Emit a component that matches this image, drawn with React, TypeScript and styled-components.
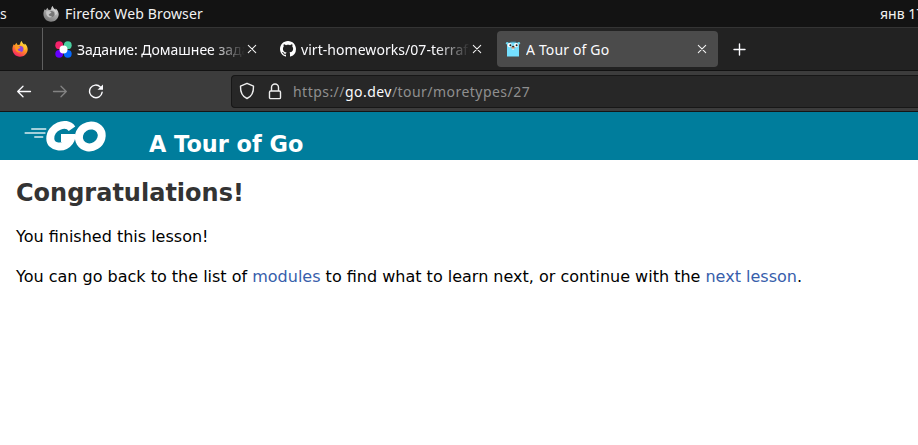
import React from 'react';
import styled, { createGlobalStyle } from 'styled-components';

const GlobalStyle = createGlobalStyle`
  * { box-sizing: border-box; }
  html, body { margin: 0; background: #fff; overflow: hidden; }
`;

const Screen = styled.div`
  width: 918px;
  height: 445px;
  overflow: hidden;
  background: #fff;
  font-family: 'DejaVu Sans', sans-serif;
`;

const UiText = styled.span<{ $spacing?: number; $size?: number }>`
  font-family: 'Noto Sans', sans-serif;
  font-size: ${(p) => p.$size ?? 14}px;
  letter-spacing: ${(p) => p.$spacing ?? 0}px;
  line-height: 20px;
  white-space: pre;
`;

const SystemBar = styled.header`
  display: flex;
  align-items: center;
  height: 27px;
  background: #131313;
  color: #f2f2f2;
`;
const Activities = styled.div`
  width: 43px;
  display: flex;
`;
const AppMenu = styled.div`
  display: flex;
  align-items: center;
  gap: 6px;
  flex: 1;
`;
const Clock = styled.div`
  width: 38px;
  overflow: hidden;
  display: flex;
`;

const TabStrip = styled.nav`
  display: flex;
  align-items: center;
  height: 44px;
  border-top: 1px solid #343434;
  border-bottom: 1px solid #121212;
  background: #222;
  color: #fbfbfe;
`;
const PinnedTab = styled.div`
  width: 43px;
  height: 100%;
  padding-left: 12px;
  display: flex;
  align-items: center;
  border-right: 1px solid #606060;
`;
const Tab = styled.div<{ $active?: boolean; $width: number; $before: number }>`
  display: flex;
  align-items: center;
  width: ${(p) => p.$width}px;
  height: 36px;
  margin-left: ${(p) => p.$before}px;
  padding: 0 11px 0 8px;
  border-radius: 4px;
  background: ${(p) => (p.$active ? '#4b4b4b' : 'transparent')};
`;
const TabLabel = styled.div<{ $fade?: boolean }>`
  flex: 1;
  min-width: 0;
  margin: 0 2px 0 5px;
  padding-top: 1px;
  overflow: hidden;
  display: flex;
  mask-image: ${(p) => (p.$fade ? 'linear-gradient(to right, #000 calc(100% - 34px), transparent)' : 'none')};
`;
const NewTab = styled.div`
  display: flex;
  margin-left: 14px;
`;

const Toolbar = styled.div`
  display: flex;
  align-items: center;
  height: 41px;
  border-bottom: 1px solid #151515;
  background: #3c3c3c;
`;
const NavButtons = styled.div`
  width: 231px;
  padding-left: 16px;
  display: flex;
  gap: 20px;
`;
const AddressBar = styled.div`
  flex: 1;
  height: 33px;
  display: flex;
  align-items: center;
  padding-left: 7px;
  border: 1px solid #171717;
  border-right: 0;
  border-radius: 4px 0 0 4px;
  background: #272727;
  color: #8f8f8f;
`;
const Shield = styled.div`
  display: flex;
  margin-right: 13px;
`;
const Lock = styled.div`
  display: flex;
  margin-right: 11px;
`;
const Url = styled.div`
  display: flex;
  padding-top: 2px;
`;
const Host = styled.span`
  color: #fbfbfe;
`;

const SiteHeader = styled.header`
  display: flex;
  align-items: flex-start;
  height: 48px;
  padding-left: 24px;
  background: #007d9c;
  color: #fff;
`;
const LogoBox = styled.div`
  width: 125px;
  padding-top: 8px;
`;
const SiteTitle = styled.div`
  padding-top: 19px;
  font-size: 22.4px;
  font-weight: 700;
  line-height: 26px;
`;

const Lesson = styled.main`
  padding: 19px 16px;
  color: #000;
  font-size: 16px;
  line-height: 20px;
`;
const Heading = styled.h2`
  margin: 0;
  color: #333;
  font-size: 24px;
  line-height: 28px;
`;
const Paragraph = styled.p`
  margin: 20px 0 0;
  white-space: nowrap;
`;
const Link = styled.a`
  color: #375eab;
  text-decoration: none;
`;

function FirefoxIcon({ mono, size = 16 }: { mono?: boolean; size?: number }) {
  const id = mono ? 'mono' : 'color';
  return (
    <svg width={size} height={size} viewBox="0 0 16 16">
      <defs>
        <linearGradient id={id} x1=".8" y1="0" x2=".25" y2="1">
          <stop offset="0" stopColor={mono ? '#ddd' : '#fff44f'} />
          <stop offset=".45" stopColor={mono ? '#aaa' : '#ff9a20'} />
          <stop offset="1" stopColor={mono ? '#777' : '#f5156c'} />
        </linearGradient>
      </defs>
      <path fill={`url(#${id})`} d="M1.8 3.3 2.8 4.3C3.3 3.1 4 2.3 4.6 1.8L5 3.4 7 4 8.1 3.2C8.1 1.8 8.9.7 9.8 0 10.1 2.1 11.3 2.6 12.4 3.8L12.7 2.6C14.7 4 15.8 6.4 15.7 8.8 15.3 13 12 15.8 8 15.8 3.7 15.8.4 12.5.4 8.1.4 6.2 1 4.6 1.8 3.3Z" />
      <circle cx="8.3" cy="8" r="3.1" fill={mono ? '#777' : '#8a45dc'} />
      <path fill={mono ? '#c5c5c5' : '#ff9821'} d="M3.2 5.2 6.2 5 8.5 6.2 7.2 7.5 5.7 8.3C5.9 10 7.5 10.6 9.2 10 7.5 13 3.2 10.7 3.2 7Z" />
      <path fill={mono ? '#d4d4d4' : '#ffc730'} d="M9 3.8C12.2 4.5 12.9 7 12 9.4L14 7.7C13.8 5.4 12 3.3 9.8 2.2Z" />
    </svg>
  );
}

function PetalsIcon() {
  return (
    <svg width="17" height="17" viewBox="0 0 17 17">
      <circle cx="4.2" cy="4.2" r="3.9" fill="#f5236b" />
      <circle cx="12.8" cy="4.2" r="3.9" fill="#4bd0a0" />
      <circle cx="4.2" cy="12.8" r="3.9" fill="#6500ff" />
      <circle cx="12.8" cy="12.8" r="3.9" fill="#0669ff" />
      <circle cx="8.5" cy="8.5" r="4" fill="#fff" />
    </svg>
  );
}

function GithubIcon() {
  return (
    <svg width="16" height="16" viewBox="0 0 16 16" fill="#fff">
      <path d="M8 0C3.58 0 0 3.58 0 8c0 3.54 2.29 6.53 5.47 7.59.4.07.55-.17.55-.38 0-.19-.01-.82-.01-1.49-2.01.37-2.53-.49-2.69-.94-.09-.23-.48-.94-.82-1.13-.28-.15-.68-.52-.01-.53.63-.01 1.08.58 1.23.82.72 1.21 1.87.87 2.33.66.07-.52.28-.87.51-1.07-1.78-.2-3.64-.89-3.64-3.95 0-.87.31-1.59.82-2.15-.08-.2-.36-1.02.08-2.12 0 0 .67-.21 2.2.82.64-.18 1.32-.27 2-.27s1.36.09 2 .27c1.53-1.04 2.2-.82 2.2-.82.44 1.1.16 1.92.08 2.12.51.56.82 1.27.82 2.15 0 3.07-1.87 3.75-3.65 3.95.29.25.54.73.54 1.48 0 1.07-.01 1.93-.01 2.2 0 .21.15.46.55.38A8.01 8.01 0 0 0 16 8c0-4.42-3.58-8-8-8Z" />
    </svg>
  );
}

function GopherIcon() {
  return (
    <svg width="16" height="16" viewBox="0 0 16 16">
      <circle cx="2.2" cy="2.2" r="1.3" fill="#6bd5ed" />
      <circle cx="13.8" cy="2.2" r="1.3" fill="#6bd5ed" />
      <path d="M2 15.5V4C2 1.2 5 .8 8 .8S14 1.2 14 4V15.5Z" fill="#75e0ff" />
      <path d="M3 2.1C4.8.5 11.2.5 13 2.1" stroke="#315b69" strokeWidth=".8" fill="none" />
      <circle cx="4.6" cy="4.1" r="2.1" fill="#fff" />
      <circle cx="11.2" cy="4.1" r="2.1" fill="#fff" />
      <circle cx="5.4" cy="4.3" r="1" fill="#222" />
      <circle cx="11.6" cy="4.3" r="1" fill="#222" />
      <rect x="7.2" y="6.6" width="1.8" height="1.9" fill="#fff" />
      <ellipse cx="8.1" cy="6.5" rx="2" ry="1.2" fill="#c79d82" />
      <ellipse cx="8.1" cy="5.6" rx="1.1" ry=".8" fill="#382d29" />
    </svg>
  );
}

function CloseIcon() {
  return (
    <svg width="10" height="10" viewBox="0 0 10 10" fill="none" stroke="#f4f4f4" strokeWidth="1.05" strokeLinecap="round">
      <path d="m1.3 1.3 7.4 7.4m0-7.4-7.4 7.4" />
    </svg>
  );
}

function Arrow({ forward }: { forward?: boolean }) {
  return (
    <svg width="16" height="16" viewBox="0 0 16 16" fill="none" stroke={forward ? '#838383' : '#fbfbfe'} strokeWidth="1.3" strokeLinecap="round" strokeLinejoin="round">
      <path d={forward ? 'M1.5 8.5H14.3M9 3.3 14.3 8.5 9 13.7' : 'M14.5 8.5H1.7M7 3.3 1.7 8.5 7 13.7'} />
    </svg>
  );
}

function ReloadIcon() {
  return (
    <svg width="16" height="16" viewBox="0 0 16 16">
      <path d="M12.3 3.9A6.3 6.3 0 1 0 14.1 9.3" fill="none" stroke="#fbfbfe" strokeWidth="1.4" strokeLinecap="round" />
      <path d="M15 1.5V6.7H9.5Z" fill="#fbfbfe" />
    </svg>
  );
}

function GoLogo() {
  return (
    <svg width="83" height="33" viewBox="0 0 83 33" fill="none" stroke="#fff">
      <path d="M8 9H21.5M1.4 13H20.7M11 17H18.5" strokeWidth="1.5" strokeLinecap="square" opacity=".85" />
      <path d="M48 8.7C42 .3 26.3 6.9 26.3 18.4 26.3 28 39.8 29 45.5 21.5 46.7 19.9 47.1 18.8 47.2 17.9H37" strokeWidth="8" />
      <ellipse cx="66.3" cy="16.4" rx="11.7" ry="10.7" strokeWidth="8" transform="rotate(-32 66.3 16.4)" />
    </svg>
  );
}

export default function App() {
  return (
    <>
      <GlobalStyle />
      <Screen>
        <SystemBar>
          <Activities><UiText>s</UiText></Activities>
          <AppMenu>
            <FirefoxIcon mono />
            <UiText $spacing={0.13}>Firefox Web Browser</UiText>
          </AppMenu>
          <Clock><UiText>янв 17</UiText></Clock>
        </SystemBar>
        <TabStrip>
          <PinnedTab><FirefoxIcon size={16} /></PinnedTab>
          <Tab $width={221} $before={4}>
            <PetalsIcon />
            <TabLabel $fade><UiText $spacing={-0.02}>Задание: Домашнее задание</UiText></TabLabel>
            <CloseIcon />
          </Tab>
          <Tab $width={221} $before={4}>
            <GithubIcon />
            <TabLabel $fade><UiText $spacing={0.05}>virt-homeworks/07-terraform</UiText></TabLabel>
            <CloseIcon />
          </Tab>
          <Tab $width={221} $before={4} $active>
            <GopherIcon />
            <TabLabel><UiText $spacing={0.15}>A Tour of Go</UiText></TabLabel>
            <CloseIcon />
          </Tab>
          <NewTab>
            <svg width="15" height="15" viewBox="0 0 15 15" stroke="#fbfbfe" strokeWidth="1.4" strokeLinecap="round">
              <path d="M7.5 2V13M2 7.5H13" />
            </svg>
          </NewTab>
        </TabStrip>
        <Toolbar>
          <NavButtons><Arrow /><Arrow forward /><ReloadIcon /></NavButtons>
          <AddressBar>
            <Shield>
              <svg width="16" height="18" viewBox="0 0 16 18" fill="none" stroke="#eee" strokeWidth="1.4" strokeLinejoin="round">
                <path d="M8 1.3 14.5 4.2C14.7 10.2 12.5 14.5 8 16.5 3.5 14.5 1.3 10.2 1.5 4.2Z" />
              </svg>
            </Shield>
            <Lock>
              <svg width="14" height="17" viewBox="0 0 14 17" fill="none" stroke="#eee" strokeWidth="1.4">
                <rect x="1.5" y="8" width="11" height="7.6" rx="1.2" />
                <path d="M3.5 8V4.5a3.5 3.5 0 0 1 7 0V8" />
              </svg>
            </Lock>
            <Url><UiText $spacing={0.46}>https://<Host>go.dev</Host>/tour/moretypes/27</UiText></Url>
          </AddressBar>
        </Toolbar>
        <SiteHeader>
          <LogoBox><GoLogo /></LogoBox>
          <SiteTitle>A Tour of Go</SiteTitle>
        </SiteHeader>
        <Lesson>
          <Heading>Congratulations!</Heading>
          <Paragraph>You finished this lesson!</Paragraph>
          <Paragraph>
            You can go back to the list of <Link>modules</Link> to find what to learn next, or continue with the <Link>next lesson</Link>.
          </Paragraph>
        </Lesson>
      </Screen>
    </>
  );
}
